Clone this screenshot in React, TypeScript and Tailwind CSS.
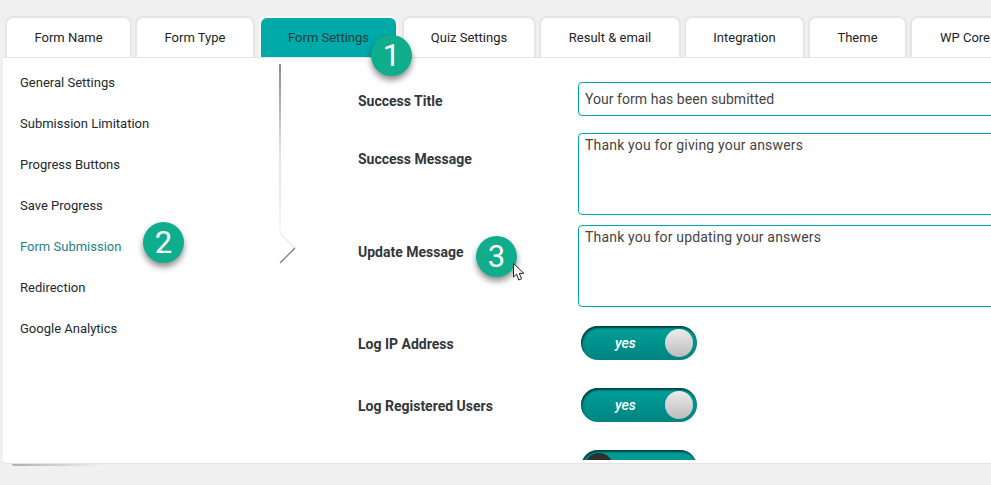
const font = "font-['Roboto',sans-serif]";

const tabs = [
  { label: "Form Name", w: "w-[127px]" },
  { label: "Form Type", w: "w-[120px]" },
  { label: "Form Settings", w: "ml-[1px] w-[139px]", active: true },
  { label: "Quiz Settings", w: "ml-[1px] w-[134px]" },
  { label: "Result & email", w: "w-[142px]" },
  { label: "Integration", w: "w-[121px]" },
  { label: "Theme", w: "w-[99px]" },
  { label: "WP Core", w: "w-[110px]" },
];

const menu = [
  "General Settings",
  "Submission Limitation",
  "Progress Buttons",
  "Save Progress",
  "Form Submission",
  "Redirection",
  "Google Analytics",
];

function Badge({ n, className }: { n: number; className: string }) {
  return (
    <div
      className={`absolute flex h-[41px] w-[41px] items-center justify-center rounded-full bg-[#10ad8d] text-[31px] font-normal leading-none text-white shadow-[0_4px_6px_rgba(0,0,0,0.45)] ${className}`}
    >
      {n}
    </div>
  );
}

function Toggle({ on }: { on: boolean }) {
  return (
    <div className="relative h-[34px] w-[116px] overflow-hidden rounded-full bg-gradient-to-b from-[#00a09a] to-[#008480] shadow-[inset_1px_2px_2px_rgba(0,40,40,0.8)]">
      {on ? (
        <>
          <span className="absolute left-[34px] top-[9px] text-[14px] font-medium italic leading-[17px] text-white">
            yes
          </span>
          <span className="absolute left-[84px] top-[3px] h-[28px] w-[28px] rounded-full bg-gradient-to-b from-[#ececec] to-[#bcbcbc]" />
        </>
      ) : (
        <span className="absolute left-[4px] top-[3px] h-[28px] w-[28px] rounded-full bg-[#2f2f2f]" />
      )}
    </div>
  );
}

function Row({
  label,
  className,
  labelClass = "",
  children,
}: {
  label: string;
  className: string;
  labelClass?: string;
  children: React.ReactNode;
}) {
  return (
    <div className={`flex ${className}`}>
      <div className={`w-[220px] shrink-0 text-[14px] font-bold leading-[20px] text-[#32373c] ${labelClass}`}>{label}</div>
      {children}
    </div>
  );
}

function Area({ text }: { text: string }) {
  return (
    <div className="h-[82px] w-[500px] rounded-[4px] border border-[#00a8a8] bg-white px-[6px] pt-[1px] text-[14px] leading-[20px] tracking-[0.18px] text-[#444]">
      {text}
    </div>
  );
}

export default function App() {
  return (
    <div className={`relative h-[485px] w-[991px] overflow-hidden bg-[#f0f0f0] pt-[16px] ${font}`}>
      <div className="flex h-[41px] w-[1100px] gap-[3px] pl-[5px]">
        {tabs.map((t) => (
          <div
            key={t.label}
            className={`${t.w} flex h-[41px] shrink-0 items-center justify-center rounded-t-[8px] border-2 border-b-0 text-[13px] ${
              t.active
                ? "border-[#f7f7f7] bg-[#00aaa8] text-[#1f3d44]"
                : "border-[#e5e5e5] bg-white text-[#1d2327]"
            }`}
          >
            {t.label}
          </div>
        ))}
      </div>
      <div className="ml-[3px] flex h-[407px] w-[1100px] rounded-bl-[4px] border-t border-b border-[#e4e4e4] bg-white">
        <div className="relative w-[278px] shrink-0 pt-[4px]">
          <div className="absolute right-0 top-[6px] h-[175px] w-[2px] bg-gradient-to-b from-[#8a8a8a] via-[#e2e2e2] to-[#f8f8f8]" />
          {menu.map((m) => (
            <div
              key={m}
              className={`flex h-[41px] items-center pl-[17px] text-[13px] ${
                m === "Form Submission" ? "text-[#1f7f8c]" : "text-[#23282d]"
              }`}
            >
              {m}
            </div>
          ))}
        </div>
        <div className="h-[402px] flex-1 overflow-hidden pl-[77px] pt-[24px]">
          <Row label="Success Title" className="h-[34px] items-center" labelClass="pt-[4px]">
            <div className="flex h-[34px] w-[500px] items-center rounded-[4px] border border-[#00a8a8] bg-white px-[6px] text-[14px] tracking-[0.04px] text-[#444]">
              Your form has been submitted
            </div>
          </Row>
          <Row label="Success Message" className="mt-[17px] h-[82px] pt-[16px]">
            <div className="-mt-[16px]">
              <Area text="Thank you for giving your answers" />
            </div>
          </Row>
          <Row label="Update Message" className="mt-[10px] h-[82px] pt-[17px]">
            <div className="-mt-[17px]">
              <Area text="Thank you for updating your answers" />
            </div>
          </Row>
          <Row label="Log IP Address" className="mt-[19px] h-[34px] items-center" labelClass="pt-[2px]">
            <div className="ml-[3px]">
              <Toggle on />
            </div>
          </Row>
          <Row label="Log Registered Users" className="mt-[28px] h-[34px] items-center" labelClass="pt-[2px]">
            <div className="ml-[3px]">
              <Toggle on />
            </div>
          </Row>
          <Row label="" className="mt-[28px] h-[34px] items-center">
            <div className="ml-[3px]">
              <Toggle on={false} />
            </div>
          </Row>
        </div>
      </div>

      <div className="absolute left-[12px] top-[464px] h-[2px] w-[90px] rounded-b-full bg-gradient-to-r from-[#b0b0b0] to-[#f0f0f0]" />

      <svg className="absolute left-[279px] top-[232px]" width="18" height="32" viewBox="0 0 18 32">
        <path d="M0 0 V31 L16 16 Z" fill="#ffffff" />
        <path d="M1 1 L16 16" stroke="#dddddd" strokeWidth="1" fill="none" />
        <path d="M16 16 L1 31" stroke="#777777" strokeWidth="1.2" fill="none" />
      </svg>

      <Badge n={1} className="left-[371px] top-[35px]" />
      <Badge n={2} className="left-[143px] top-[222px]" />
      <Badge n={3} className="left-[476px] top-[236px]" />

      <svg className="absolute left-[513px] top-[263px]" width="14" height="19" viewBox="0 0 14 19">
        <path
          d="M0.5 0.5 L0.5 14 L3.6 11.2 L5.8 17 L8.6 15.8 L6.3 10.4 L10.8 10.2 Z"
          fill="#ffffff"
          stroke="#222222"
          strokeWidth="1"
          strokeLinejoin="round"
        />
      </svg>
    </div>
  );
}
